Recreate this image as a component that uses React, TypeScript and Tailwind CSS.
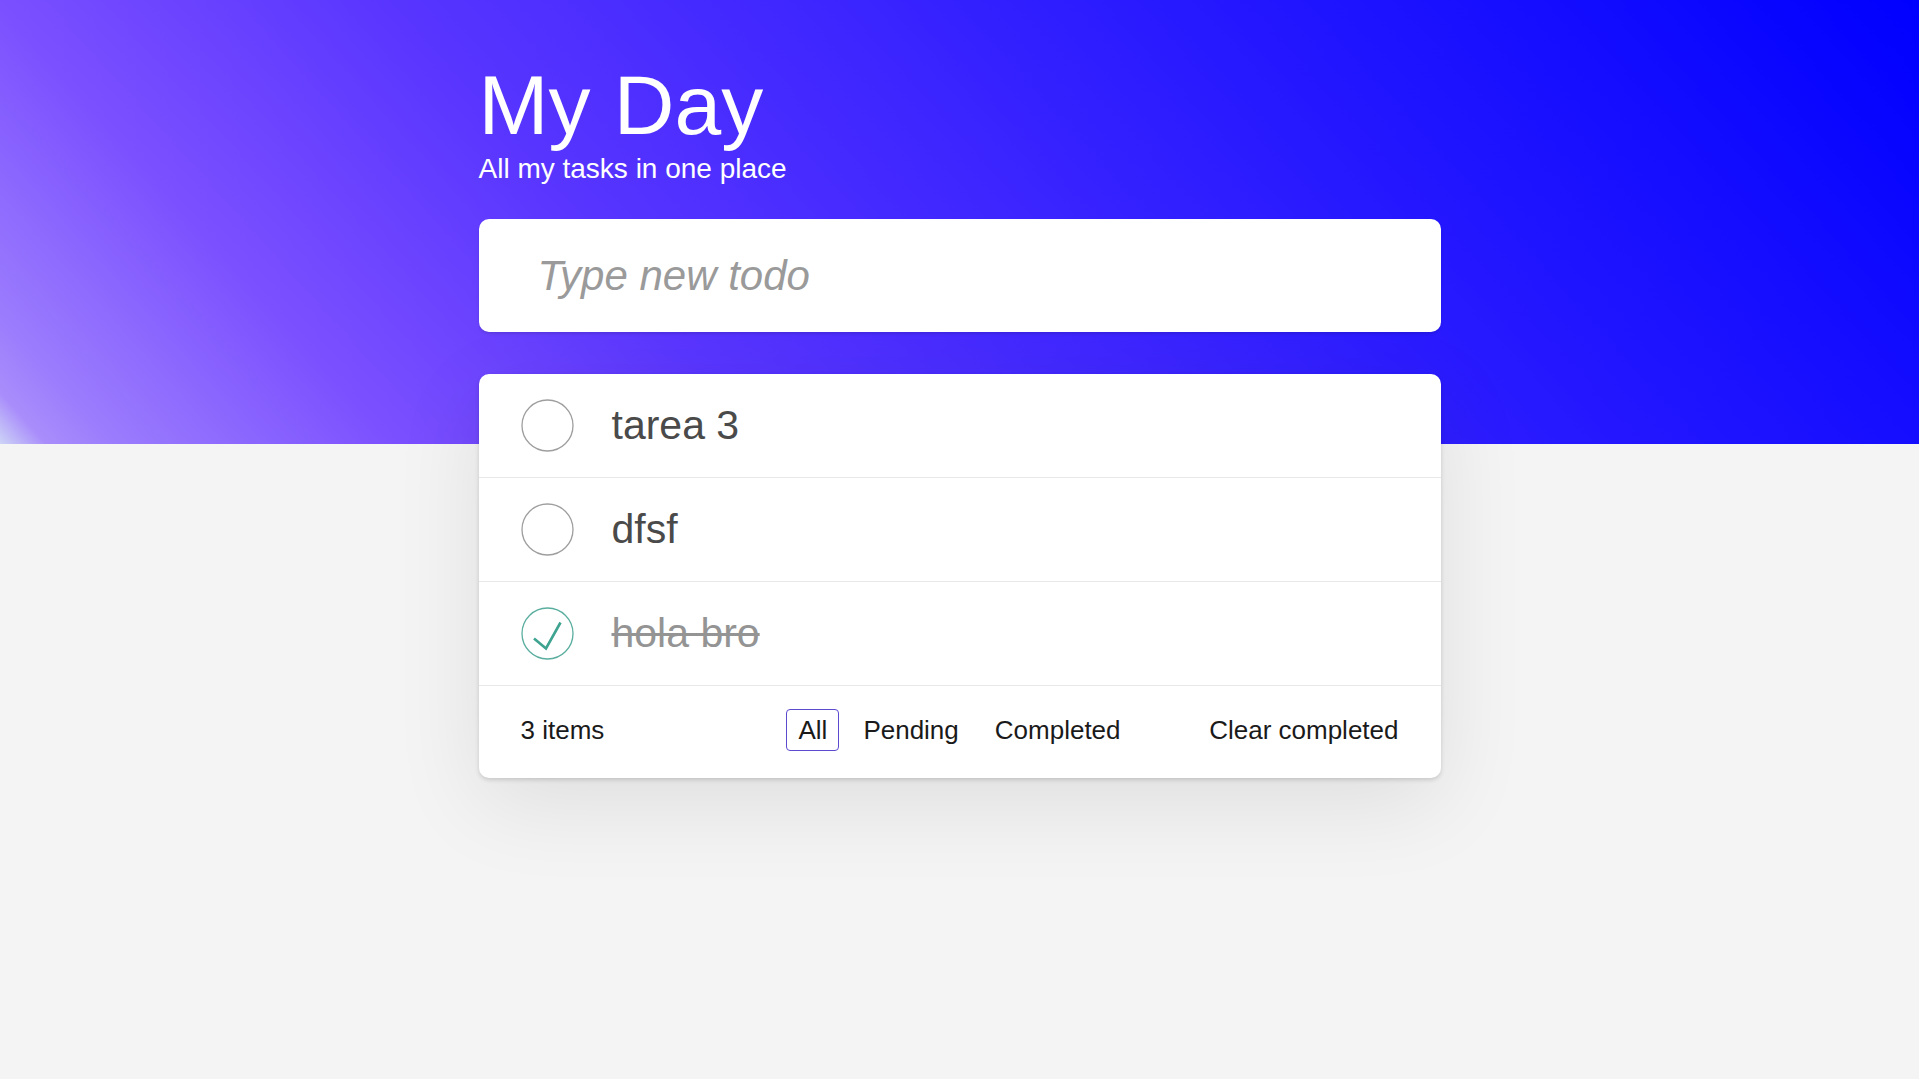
import React, { useState } from 'react';

interface Todo {
  id: number;
  title: string;
  done: boolean;
}

type Filter = 'all' | 'pending' | 'completed';

const initialTodos: Todo[] = [
  { id: 3, title: 'tarea 3', done: false },
  { id: 2, title: 'dfsf', done: false },
  { id: 1, title: 'hola bro', done: true },
];

function CheckCircle({ done }: { done: boolean }) {
  return (
    <svg width="53" height="53" viewBox="0 0 53 53" className="shrink-0">
      <circle
        cx="26.5"
        cy="26.5"
        r="25.5"
        fill="none"
        stroke={done ? '#5aae9f' : '#9e9e9e'}
        strokeWidth="1.3"
      />
      {done && (
        <polyline
          points="13,31.5 25,41.5 39.5,15.5"
          fill="none"
          stroke="#3ea390"
          strokeWidth="2.6"
        />
      )}
    </svg>
  );
}

export default function App() {
  const [todos, setTodos] = useState<Todo[]>(initialTodos);
  const [filter, setFilter] = useState<Filter>('all');
  const [text, setText] = useState('');

  const addTodo = (e: React.FormEvent) => {
    e.preventDefault();
    if (!text.trim()) return;
    setTodos([{ id: Date.now(), title: text.trim(), done: false }, ...todos]);
    setText('');
  };

  const toggle = (id: number) =>
    setTodos(todos.map((t) => (t.id === id ? { ...t, done: !t.done } : t)));

  const visible = todos.filter((t) =>
    filter === 'all' ? true : filter === 'pending' ? !t.done : t.done
  );

  const filterBtn = (key: Filter, label: string) => (
    <button
      onClick={() => setFilter(key)}
      className={`px-[11px] h-[42px] rounded-[4px] border leading-none ${
        filter === key ? 'border-[#5a4bcf]' : 'border-transparent'
      }`}
    >
      {label}
    </button>
  );

  return (
    <div className="min-h-screen bg-[#f4f4f4] bg-[linear-gradient(48deg,#cdd4f6_0%,#a98dfb_2%,#9b7cfd_5%,#7b50ff_17%,#5a36ff_33%,#2a1bff_65%,#0000ff_100%)] bg-[length:100%_444px] bg-no-repeat font-['Liberation_Sans',Arial,sans-serif]">
      <div className="w-[962px] mx-auto pt-[63px] pb-24">
        <header className="text-white">
          <h1 className="text-[84px] leading-none">My Day</h1>
          <p className="text-[28px] leading-none mt-[8px]">All my tasks in one place</p>
        </header>

        {/* Nuevo todo */}
        <form onSubmit={addTodo} className="mt-[36px]">
          <input
            value={text}
            onChange={(e) => setText(e.target.value)}
            placeholder="Type new todo"
            className="w-full h-[113px] bg-white rounded-[10px] pl-[59px] pr-8 text-[42px] text-[#4d4d4d] outline-none shadow-[0_2px_3px_rgba(0,0,0,0.12)] placeholder:italic placeholder:text-[#9a9a9a]"
          />
        </form>

        {/* Lista */}
        <section className="mt-[42px] bg-white rounded-[10px] shadow-[0_2px_4px_rgba(0,0,0,0.15),0_25px_90px_rgba(0,0,0,0.09)]">
          <ul>
            {visible.map((todo) => (
              <li
                key={todo.id}
                onClick={() => toggle(todo.id)}
                className="h-[104px] flex items-center pl-[42px] border-b border-[#e9e9e9] cursor-pointer"
              >
                <CheckCircle done={todo.done} />
                <span
                  className={`ml-[38px] text-[41px] leading-none ${
                    todo.done ? 'text-[#949494] line-through decoration-[3px]' : 'text-[#4a4a4a]'
                  }`}
                >
                  {todo.title}
                </span>
              </li>
            ))}
          </ul>

          <footer className="h-[92px] grid grid-cols-[1fr_auto_1fr] items-center px-[42px] pb-[4px] text-[26px] text-[#1a1a1a]">
            <span>{todos.length} items</span>
            <div className="flex items-center gap-[12px]">
              {filterBtn('all', 'All')}
              {filterBtn('pending', 'Pending')}
              {filterBtn('completed', 'Completed')}
            </div>
            <button
              onClick={() => setTodos(todos.filter((t) => !t.done))}
              className="justify-self-end"
            >
              Clear completed
            </button>
          </footer>
        </section>
      </div>
    </div>
  );
}
